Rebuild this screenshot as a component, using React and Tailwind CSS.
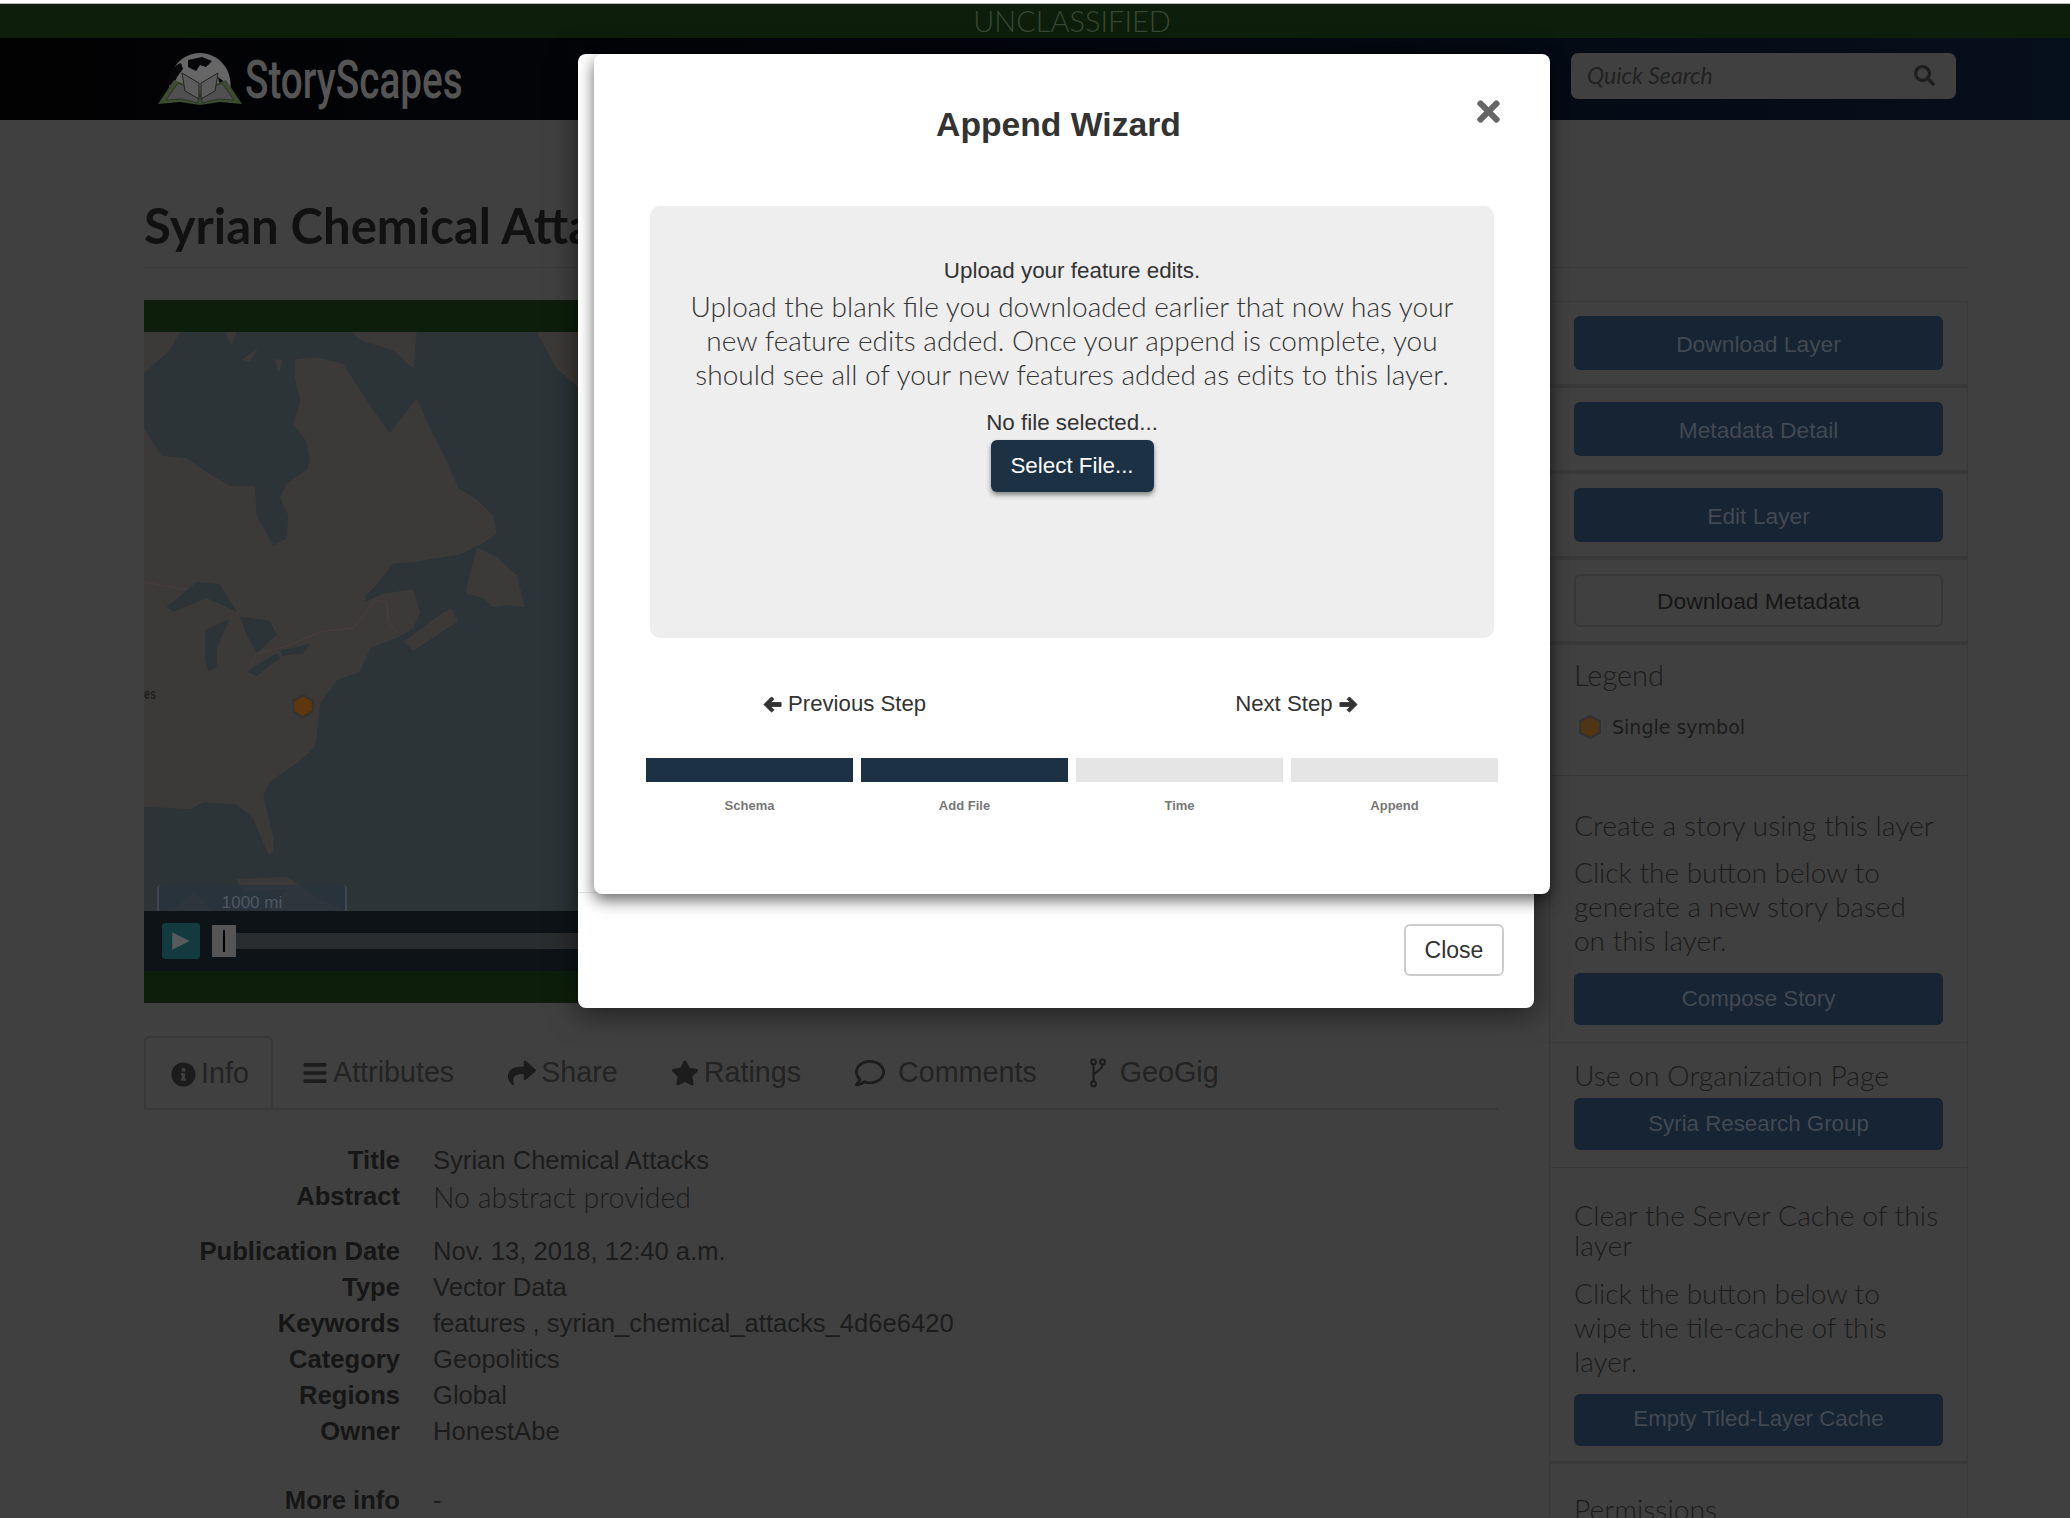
import React from 'react';
import { FaInfoCircle, FaBars, FaShare, FaStar, FaRegComment, FaTimes, FaSearch } from 'react-icons/fa';

const lato = 'font-["Lato","Open_Sans",sans-serif]';

const infoTop = [
  ['Publication Date', 'Nov. 13, 2018, 12:40 a.m.'],
  ['Type', 'Vector Data'],
  ['Keywords', 'features , syrian_chemical_attacks_4d6e6420'],
  ['Category', 'Geopolitics'],
  ['Regions', 'Global'],
  ['Owner', 'HonestAbe'],
];

const steps = [
  { label: 'Schema', on: true },
  { label: 'Add File', on: true },
  { label: 'Time', on: false },
  { label: 'Append', on: false },
];

function ForkIcon() {
  return (
    <svg viewBox="0 0 16 30" className="w-[16px] h-[30px]" fill="none" stroke="#1c1c1c" strokeWidth="2">
      <circle cx="3.5" cy="4" r="2.4" />
      <circle cx="12.5" cy="4" r="2.4" />
      <circle cx="3.5" cy="26" r="2.4" />
      <path d="M3.5 6.5v17M12.5 6.5c0 7-9 6-9 12" />
    </svg>
  );
}

// heavier than the icon package's arrow, closer to the old font-awesome one
function Arrow({ flip = false }) {
  return (
    <svg viewBox="0 0 20 20" className={flip ? 'w-[19px] h-[19px] -scale-x-100' : 'w-[19px] h-[19px]'}>
      <path d="M9 2l2.5 2.5L7.5 8H19v4H7.5l4 3.500L9 18 1 10z" fill="#333" stroke="#333" strokeWidth="1" strokeLinejoin="round" />
    </svg>
  );
}

function Logo() {
  return (
    <svg viewBox="0 0 84 52" className="w-[84px] h-[52px]">
      <path d="M12 40C8 16 24 0 42 0s34 16 30 40z" fill="#666" />
      <path d="M9 30c2-12 8-18 14-20l2 6-6 8-4 10zM30 7l14-3 10 4-6 6-6-2-4 6-8-4zM60 24l8 6 2 8-8-4z" fill="#070709" />
      <path d="M0 51l16-24 26 10 26-10 16 24-22-2-20 3-20-3z" fill="#3c4c30" />
      <path d="M8 47l12-17 20 9v11l-16-4zM76 47L64 30l-20 9v11l16-4z" fill="#505050" stroke="#2c3326" strokeWidth="1" />
      <path d="M24 20l17 10v16L27 38zM60 20L43 30v16l14-8z" fill="#5c5c5c" stroke="#222" strokeWidth="1" />
    </svg>
  );
}

function MapArt() {
  const land = '#3c3a39';
  const water = '#2c3437';
  return (
    <svg viewBox="42 70 1302 1262" preserveAspectRatio="none" className="absolute left-0 top-0 w-[434px] h-full">
      <rect x="42" y="70" width="1302" height="1262" fill={water} />
      <path fill={land} d="M42 280L95 340 170 345 240 380 300 405 375 405 380 470 430 535 470 520 475 470 450 430 470 400 530 370 540 350 530 310 490 270 510 220 495 170 495 130 560 125 640 140 720 230 780 290 860 215 900 280 950 350 985 410 1040 435 1090 470 1100 510 1060 530 990 555 860 570 790 575 730 630 700 660 760 640 850 630 870 680 850 715 820 730 720 760 690 810 620 830 570 880 560 950 555 975 500 1010 420 1050 400 1080 430 1170 430 1200 415 1210 370 1130 320 1100 220 1095 180 1110 42 1105z" />
      <path fill={land} d="M820 745L960 670 985 700 850 765zM1040 540L1100 560 1160 600 1185 670 1130 665 1090 670 1060 650 1005 640zM42 70H150L120 110 42 160zM285 70H320L305 100zM660 70H860L850 150 790 110 700 90zM1220 70H1344V190L1280 150zM335 130L385 105 360 135zM435 130L460 130 445 160zM320 1262L470 1258 580 1310 660 1332H420L470 1285 340 1290zM130 1332L190 1290 250 1332z" />
      <path fill={water} d="M110 670L200 615 270 620 320 680 230 650 130 680zM225 720L300 695 290 710 260 760 260 800 235 810 225 780zM330 690L420 700 440 730 380 770 350 730zM350 810L440 770 450 780 380 820zM450 765L540 750 520 770 460 775zM870 585L930 590 935 605 880 595zM700 650L790 585 860 580 1000 590 1010 640 950 680 870 680 850 630 760 640z" />
      <path fill="none" stroke="#4d3d40" strokeWidth="2" d="M42 615L170 632M350 810L380 770 470 755 580 722 670 715 735 655 770 660 775 700 800 725" />
      <text x="42" y="870" fontSize="32" fontFamily="Liberation Sans, sans-serif" fontWeight="700" fill="#1e1e1e">es</text>
      <polygon points="518,862 548,873 548,897 518,910 490,897 490,873" fill="#5e380c" stroke="#333333" strokeWidth="5" />
    </svg>
  );
}

function SideButton({ children, className = 'h-[54px] pt-[2px] text-[22.8px]' }) {
  return (
    <div className={`${className} rounded-[6px] bg-[#162434] text-[#424952] flex items-center justify-center font-["Liberation_Sans",sans-serif]`}>
      {children}
    </div>
  );
}

function Sidebar() {
  return (
    <aside className={`w-[419px] ml-[51px] mt-[33px] border-x border-[#393939] text-[#1c1c1c] shrink-0 ${lato}`}>
      <div className="pt-[14px] px-[24px] pb-[14px] border-t border-b-4 border-[#393939]"><SideButton>Download Layer</SideButton></div>
      <div className="pt-[14px] px-[24px] pb-[14px] border-b-4 border-[#393939]"><SideButton>Metadata Detail</SideButton></div>
      <div className="pt-[14px] px-[24px] pb-[14px] border-b-4 border-[#393939]"><SideButton>Edit Layer</SideButton></div>
      <div className="pt-[14px] px-[24px] pb-[14px] border-b-4 border-[#393939]">
        <div className='h-[53px] pt-[2px] rounded-[6px] border-2 border-[#373737] text-[#161616] text-[22.8px] flex items-center justify-center font-["Liberation_Sans",sans-serif]'>Download Metadata</div>
      </div>

      <div className="px-[24px] pt-[12px] pb-[36px] border-b border-[#393939]">
        <h3 className="text-[29px] leading-[36px] font-light">Legend</h3>
        <div className="mt-[22px] h-[24px] flex items-center gap-[11px] pl-[5px]">
          <svg viewBox="0 0 22 24" className="w-[22px] h-[24px]"><polygon points="11,1 21,6 21,18 11,23 1,18 1,6" fill="#4f3513" stroke="#333333" strokeWidth="2" /></svg>
          <span className='font-["DejaVu_Sans",sans-serif] text-[19px]'>Single symbol</span>
        </div>
      </div>

      <div className="px-[24px] pt-[34px] pb-[17px] border-b border-[#393939]">
        <h3 className="text-[28.3px] leading-[30px] font-light whitespace-nowrap">Create a story using this layer</h3>
        <p className="mt-[15px] text-[28px] leading-[34px] font-light">Click the button below to generate a new story based on this layer.</p>
        <div className="mt-[16px]"><SideButton className="h-[52px] text-[22.3px]">Compose Story</SideButton></div>
      </div>

      <div className="px-[24px] pt-[17px] pb-[17px] border-b border-[#393939]">
        <h3 className="text-[28.3px] leading-[30px] font-light whitespace-nowrap">Use on Organization Page</h3>
        <div className="mt-[8px]"><SideButton className="h-[52px] text-[22.3px]">Syria Research Group</SideButton></div>
      </div>

      <div className="px-[24px] pt-[32px] pb-[15px] border-b-[3px] border-[#393939]">
        <h3 className="text-[28.3px] leading-[30px] font-light">Clear the Server Cache of this layer</h3>
        <p className="mt-[16px] text-[28px] leading-[34px] font-light">Click the button below to wipe the tile-cache of this layer.</p>
        <div className="mt-[16px]"><SideButton className="h-[52px] pb-[3px] text-[22.3px]">Empty Tiled-Layer Cache</SideButton></div>
      </div>

      <div className="px-[24px] pt-[30px]">
        <h3 className="text-[28.3px] leading-[30px] font-light">Permissions</h3>
      </div>
    </aside>
  );
}

function Tabs() {
  const tab = 'px-[27px] pt-[2px] h-[72px] flex items-center text-[28.7px] font-light text-[#232323]';
  return (
    <div className="mt-[33px] flex border-b-2 border-[#383838]">
      <div className={`${tab} w-[129px] gap-[5px] border-x-2 border-t-2 border-[#383838] rounded-t-[6px] -mb-[2px] bg-[#404040] !px-[25px]`}><FaInfoCircle className="text-[25px] text-[#1c1c1c] shrink-0" />Info</div>
      <div className={`${tab} ml-[2px] gap-[5px]`}><FaBars className="text-[26px] text-[#1c1c1c] shrink-0" />Attributes</div>
      <div className={`${tab} gap-[5px]`}><FaShare className="text-[28px] text-[#1c1c1c] shrink-0" />Share</div>
      <div className={`${tab} -ml-[1px] gap-[5px]`}><FaStar className="text-[28px] text-[#1c1c1c] shrink-0" />Ratings</div>
      <div className={`${tab} gap-[13px]`}><FaRegComment className="text-[30px] text-[#1c1c1c] shrink-0" />Comments</div>
      <div className={`${tab} -ml-[1px] gap-[14px]`}><ForkIcon />GeoGig</div>
    </div>
  );
}

function Row({ label, children, className = '' }) {
  return (
    <div className={`flex gap-[33px] leading-[36px] text-[25.6px] ${className}`}>
      <div className="w-[256px] text-right font-bold text-[#161616] shrink-0">{label}</div>
      <div className="text-[#1c1c1c]">{children}</div>
    </div>
  );
}

function Info() {
  return (
    <div className='pt-[32px] font-["Liberation_Sans",sans-serif]'>
      <Row label="Title">Syrian Chemical Attacks</Row>
      <Row label="Abstract"><span className={`${lato} relative top-[1px] text-[28.5px] font-light text-[#1c1c1c]`}>No abstract provided</span></Row>
      <div className="mt-[17px]">
        {infoTop.map(([k, v]) => <Row key={k} label={k}>{v}</Row>)}
      </div>
      <Row label="More info" className="mt-[33px]">-</Row>
    </div>
  );
}

function BackModal() {
  return (
    <div className="absolute left-[578px] top-[54px] w-[956px] h-[954px] rounded-[8px] bg-white shadow-[0_5px_30px_rgba(0,0,0,0.55)] flex flex-col justify-end">
      <div className='border-t border-[#e5e5e5] h-[116px] pt-[31px] pr-[30px] flex justify-end font-["Liberation_Sans",sans-serif]'>
        <div className="w-[100px] h-[52px] rounded-[6px] border-2 border-[#cccccc] text-[#333] text-[23px] flex items-center justify-center">Close</div>
      </div>
    </div>
  );
}

function FrontModal() {
  return (
    <div className='absolute left-[594px] top-[54px] w-[956px] h-[840px] rounded-[8px] bg-white shadow-[0_6px_16px_rgba(0,0,0,0.6)] font-["Liberation_Sans",sans-serif] text-[#333]'>
      <FaTimes className="absolute right-[45px] top-[41px] text-[33px] text-[#666]" />
      <h2 className="pt-[50px] pr-[27px] text-center text-[33.7px] leading-[40px] font-bold">Append Wizard</h2>
      <div className="mt-[62px] mx-[56px] h-[432px] rounded-[10px] bg-[#eeeeee] flex flex-col items-center pt-[50px]">
        <p className="text-[22.4px] leading-[30px]">Upload your feature edits.</p>
        <p className={`${lato} mt-[3px] w-[800px] text-center text-[28px] leading-[34px] font-light`}>Upload the blank file you downloaded earlier that now has your new feature edits added. Once your append is complete, you should see all of your new features added as edits to this layer.</p>
        <p className="mt-[17px] text-[22.4px] leading-[30px]">No file selected...</p>
        <div className="mt-[2px] w-[163px] h-[52px] rounded-[6px] bg-[#1d3144] text-white text-[22.4px] flex items-center justify-center shadow-[0_3px_5px_rgba(0,0,0,0.45)]">Select File...</div>
      </div>
      <div className="mt-[51px] flex text-[22.2px] leading-[30px] h-[30px]">
        <div className="ml-[169px] flex items-center gap-[6px]"><Arrow />Previous Step</div>
        <div className="ml-[309px] flex items-center gap-[6px]">Next Step<Arrow flip /></div>
      </div>
      <div className="mt-[39px] ml-[52px] w-[852px] grid grid-cols-4 gap-[8px]">
        {steps.map((s) => (
          <div key={s.label} className="flex flex-col items-center">
            <div className={s.on ? 'h-[24px] w-full bg-[#1d3144]' : 'h-[24px] w-full bg-[#e5e5e5]'} />
            <span className="mt-[15px] text-[13px] leading-[18px] font-bold text-[#777]">{s.label}</span>
          </div>
        ))}
      </div>
    </div>
  );
}

export default function App() {
  return (
    <div className='relative h-[1518px] overflow-hidden bg-[#404040] font-["Liberation_Sans",sans-serif]'>
      <div className="h-[4px] bg-white border-b border-[#bbbbbb]" />
      <div className={`h-[34px] pl-[74px] bg-[#0d1f0a] flex items-center justify-center text-[29px] font-light text-[#384836] ${lato}`}>UNCLASSIFIED</div>

      <nav className="h-[82px] bg-gradient-to-r from-[#020203] to-[#060f1c] flex items-center pl-[158px] pr-[114px]">
        <Logo />
        <span className='ml-[3px] w-[215px] origin-left scale-x-[0.73] mt-[3px] text-[53px] leading-none font-medium text-[#555] font-["Roboto",sans-serif] whitespace-nowrap'>StoryScapes</span>
        <div className={`ml-auto mb-[7px] w-[385px] h-[46px] rounded-[7px] bg-[#404040] flex items-center justify-between pl-[16px] pr-[21px] text-[#222] ${lato}`}>
          <span className="italic text-[23px]">Quick Search</span>
          <FaSearch className="text-[21px] text-[#1f1f1f]" />
        </div>
      </nav>

      <div className="pl-[144px] pr-[102px]">
        <h1 className={`${lato} pt-[81px] pb-[17px] border-b border-[#3b3b3b] text-[49px] leading-[49px] font-bold text-[#111]`}>Syrian Chemical Attacks</h1>
        <div className="flex">
          <div className="w-[1354px] shrink-0">
            <div className="mt-[32px] h-[32px] bg-[#0d1f0a]" />
            <div className="relative h-[579px] bg-[#2c3437]">
              <MapArt />
              <div className="absolute left-[13px] bottom-0 w-[190px] h-[26px] bg-[#28333d]/70 rounded-t-[4px] border-x-2 border-[#3f4850] flex items-end justify-center text-[#4f5962] text-[17px] leading-[16px]">1000 mi</div>
            </div>
            <div className="h-[60px] bg-[#0d1317] flex items-center pl-[18px] gap-[12px]">
              <div className="w-[38px] h-[36px] rounded-[3px] bg-[#123a3f] flex items-center justify-center">
                <svg viewBox="0 0 16 16" className="w-[20px] h-[20px]"><polygon points="1,1 15,8 1,15" fill="#555c5e" /></svg>
              </div>
              <div className="relative flex-1 h-[16px] bg-[#2a2d2f]">
                <div className="absolute left-0 top-[-8px] w-[24px] h-[32px] bg-[#555] flex items-center justify-center"><div className="w-[2px] h-[22px] bg-black" /></div>
              </div>
            </div>
            <div className="h-[32px] bg-[#0d1f0a]" />
            <Tabs />
            <Info />
          </div>
          <Sidebar />
        </div>
      </div>

      <BackModal />
      <FrontModal />
    </div>
  );
}
